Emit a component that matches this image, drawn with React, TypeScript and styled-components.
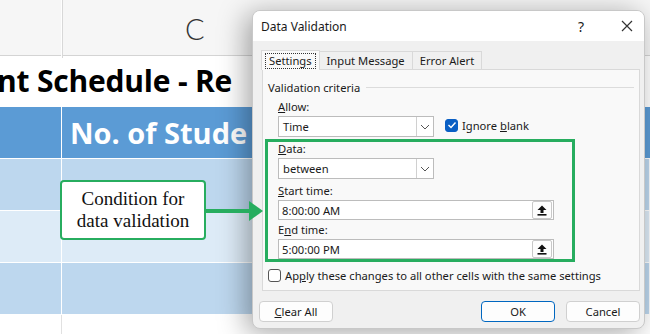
import styled, { createGlobalStyle } from "styled-components";

const GlobalStyle = createGlobalStyle`
  html, body {
    margin: 0;
    padding: 0;
    background: #ffffff;
  }
`;

const ui = `"Noto Sans", "Open Sans", sans-serif`;
const sheetFont = `Lato, "Open Sans", sans-serif`;

export default function App() {
  return (
    <Page>
      <GlobalStyle />
      <Sheet>
        <ColHeader>
          <Cell />
          <ColLetter>C</ColLetter>
        </ColHeader>
        <TitleRow>nt Schedule - Re</TitleRow>
        <Row $bg="#5b9bd5">
          <Cell />
          <HeadText>No. of Stude</HeadText>
        </Row>
        <Row $bg="#bdd7ee">
          <Cell />
          <Cell />
        </Row>
        <Row $bg="#ddebf7">
          <Cell />
          <Cell />
        </Row>
        <Row $bg="#bdd7ee">
          <Cell />
          <Cell />
        </Row>
        <Row $bg="#ffffff" $line="#e1e1e1">
          <Cell />
          <Cell />
        </Row>
      </Sheet>

      <Callout>
        Condition for
        <br />
        data validation
      </Callout>

      <Dialog>
        <TitleBar>
          <span>Data Validation</span>
          <TitleIcons>
            <span>?</span>
            <CloseIcon width="14" height="14" viewBox="0 0 14 14">
              <path d="M2 2 L12 12 M12 2 L2 12" stroke="#333" strokeWidth="1.2" />
            </CloseIcon>
          </TitleIcons>
        </TitleBar>
        <Body>
          <Tabs>
            <Tab $active>
              <Focus>Settings</Focus>
            </Tab>
            <Tab>Input Message</Tab>
            <Tab>Error Alert</Tab>
          </Tabs>
          <Panel>
            <GroupTitle>
              <span>Validation criteria</span>
              <Rule />
            </GroupTitle>
            <Field>
              <Label>
                <u>A</u>llow:
              </Label>
              <InlineRow>
                <Select>
                  <span>Time</span>
                  <DropButton>
                    <Chevron />
                  </DropButton>
                </Select>
                <Check>
                  <Box $checked>
                    <svg width="10" height="10" viewBox="0 0 10 10">
                      <path d="M1.5 5 L4 7.5 L8.5 2.5" stroke="#fff" strokeWidth="1.4" fill="none" />
                    </svg>
                  </Box>
                  <span>
                    Ignore <u>b</u>lank
                  </span>
                </Check>
              </InlineRow>
            </Field>
            <Field $gap={4}>
              <Label>
                <u>D</u>ata:
              </Label>
              <Select>
                <span>between</span>
                <DropButton>
                  <Chevron />
                </DropButton>
              </Select>
            </Field>
            <Field $gap={4}>
              <Label>
                <u>S</u>tart time:
              </Label>
              <TextBox>
                <span>8:00:00 AM</span>
                <RefButton>
                  <UpArrow />
                </RefButton>
              </TextBox>
            </Field>
            <Field $gap={2}>
              <Label>
                E<u>n</u>d time:
              </Label>
              <TextBox>
                <span>5:00:00 PM</span>
                <RefButton>
                  <UpArrow />
                </RefButton>
              </TextBox>
            </Field>
            <ApplyRow>
              <Box />
              <span>
                Ap<u>p</u>ly these changes to all other cells with the same settings
              </span>
            </ApplyRow>
          </Panel>
          <Buttons>
            <Button>
              <u>C</u>lear All
            </Button>
            <Spacer />
            <Button $primary>OK</Button>
            <Button>Cancel</Button>
          </Buttons>
          <Highlight />
        </Body>
      </Dialog>

      <Arrow width="60" height="26" viewBox="0 0 60 26">
        <rect x="0" y="11" width="46" height="4" fill="#27ad5f" />
        <polygon points="44,3 58,13 44,23" fill="#27ad5f" />
      </Arrow>
    </Page>
  );
}

function Chevron() {
  return (
    <svg width="10" height="6" viewBox="0 0 10 6">
      <path d="M1 1 L5 5 L9 1" stroke="#555" strokeWidth="1" fill="none" />
    </svg>
  );
}

function UpArrow() {
  return (
    <svg width="10" height="11" viewBox="0 0 10 11">
      <path d="M5 0.5 L9.5 5 L6.5 5 L6.5 8 L3.5 8 L3.5 5 L0.5 5 Z" fill="#111" />
      <rect x="0.5" y="9" width="9" height="1.6" fill="#111" />
    </svg>
  );
}

const Page = styled.div`
  position: relative;
  width: 650px;
  height: 334px;
  overflow: hidden;
  background: #ffffff;
`;

const Sheet = styled.div`
  display: flex;
  flex-direction: column;
`;

const ColHeader = styled.div`
  display: grid;
  grid-template-columns: 62px 1fr;
  height: 55px;
  background: #f6f6f6;
  border-bottom: 1px solid #d4d4d4;
`;

const Cell = styled.div`
  border-right: 1px solid rgba(255, 255, 255, 0.9);
`;

const ColLetter = styled.div`
  border-left: 1px solid #d8d8d8;
  padding-left: 122px;
  font-family: ${sheetFont};
  font-size: 29px;
  font-weight: 300;
  color: #333;
  line-height: 58px;
`;

const TitleRow = styled.div`
  height: 50px;
  margin-left: -3px;
  font-family: "Open Sans", sans-serif;
  font-weight: 700;
  font-size: 30px;
  line-height: 50px;
  color: #000;
  white-space: nowrap;
  letter-spacing: -0.2px;
`;

const Row = styled.div<{ $bg: string; $line?: string }>`
  display: grid;
  grid-template-columns: 62px 1fr;
  height: 51px;
  background: ${(p) => p.$bg};
  border-top: 1px solid #ffffff;
  & > div:first-child {
    border-right: 1px solid ${(p) => p.$line ?? "#ffffff"};
  }
`;

const HeadText = styled.div`
  padding-left: 8px;
  font-family: "Open Sans", sans-serif;
  font-weight: 700;
  font-size: 29px;
  line-height: 52px;
  color: #ffffff;
  white-space: nowrap;
`;

const Callout = styled.div`
  position: absolute;
  left: 60px;
  top: 180px;
  width: 142px;
  height: 56px;
  border: 2px solid #27ad5f;
  border-radius: 4px;
  background: #ffffff;
  font-family: "Liberation Serif", "DejaVu Serif", serif;
  font-size: 19px;
  line-height: 22px;
  text-align: center;
  color: #111;
  display: flex;
  align-items: center;
  justify-content: center;
`;

const Arrow = styled.svg`
  position: absolute;
  left: 205px;
  top: 198px;
`;

const Dialog = styled.div`
  position: absolute;
  left: 252px;
  top: 10px;
  width: 393px;
  height: 319px;
  border-radius: 8px;
  overflow: hidden;
  background: #f0f0f0;
  border: 1px solid #c8c8c8;
  box-sizing: border-box;
  box-shadow: -6px 4px 28px rgba(0, 0, 0, 0.35);
  font-family: ${ui};
  font-size: 11.2px;
  color: #1a1a1a;
  display: flex;
  flex-direction: column;
`;

const TitleBar = styled.div`
  height: 30px;
  background: #ffffff;
  display: flex;
  align-items: center;
  justify-content: space-between;
  padding: 0 10px 0 8px;
  font-size: 12px;
`;

const TitleIcons = styled.div`
  display: flex;
  align-items: center;
  gap: 36px;
  font-size: 14px;
`;

const CloseIcon = styled.svg`
  display: block;
`;

const Body = styled.div`
  position: relative;
  flex: 1;
  padding: 8px 4px 0 9px;
  display: flex;
  flex-direction: column;
`;

const Tabs = styled.div`
  display: flex;
  height: 20px;
  align-items: flex-end;
`;

const Tab = styled.div<{ $active?: boolean }>`
  height: ${(p) => (p.$active ? "20px" : "18px")};
  box-sizing: border-box;
  display: flex;
  align-items: center;
  border: 1px solid #d9d9d9;
  border-bottom: none;
  margin-left: -1px;
  background: ${(p) => (p.$active ? "#f9f9f9" : "#f0f0f0")};
  padding: ${(p) => (p.$active ? "0 3px" : "0 7px")};
  position: relative;
  z-index: ${(p) => (p.$active ? 1 : 0)};
  margin-bottom: ${(p) => (p.$active ? "-1px" : "0")};
`;

const Focus = styled.span`
  border: 1px dotted #333;
  padding: 0 3px;
  line-height: 14px;
`;

const Panel = styled.div`
  height: 222px;
  box-sizing: border-box;
  background: #f9f9f9;
  border: 1px solid #d9d9d9;
  padding: 9px 0 0 5px;
  display: flex;
  flex-direction: column;
`;

const GroupTitle = styled.div`
  display: flex;
  align-items: center;
  gap: 6px;
  height: 16px;
  padding-right: 5px;
`;

const Rule = styled.div`
  flex: 1;
  height: 1px;
  background: #dcdcdc;
`;

const Field = styled.div<{ $gap?: number }>`
  display: flex;
  flex-direction: column;
  padding-left: 10px;
  margin-top: ${(p) => p.$gap ?? 4}px;
`;

const Label = styled.div`
  height: 16px;
  line-height: 16px;
  margin-bottom: 1px;
`;

const InlineRow = styled.div`
  display: flex;
  align-items: flex-start;
  gap: 11px;
`;

const Select = styled.div`
  width: 156px;
  height: 21px;
  box-sizing: border-box;
  background: #ffffff;
  border: 1px solid #bcbcbc;
  display: flex;
  align-items: center;
  justify-content: space-between;
  padding-left: 4px;
`;

const DropButton = styled.div`
  width: 16px;
  height: 100%;
  border-left: 1px solid #d0d0d0;
  display: flex;
  align-items: center;
  justify-content: center;
`;

const Check = styled.div`
  display: flex;
  align-items: center;
  gap: 4px;
  height: 16px;
  margin-top: 1px;
`;

const Box = styled.div<{ $checked?: boolean }>`
  width: 13px;
  height: 13px;
  box-sizing: border-box;
  border-radius: 3px;
  background: ${(p) => (p.$checked ? "#0a5fc4" : "#ffffff")};
  border: 1px solid ${(p) => (p.$checked ? "#0a5fc4" : "#555")};
  display: flex;
  align-items: center;
  justify-content: center;
`;

const TextBox = styled.div`
  width: 276px;
  height: 20px;
  box-sizing: border-box;
  background: #ffffff;
  border: 1px solid #bcbcbc;
  display: flex;
  align-items: center;
  justify-content: space-between;
  padding-left: 3px;
`;

const RefButton = styled.div`
  width: 18px;
  height: 16px;
  margin-right: 1px;
  border: 1px solid #c8c8c8;
  border-radius: 2px;
  background: #fdfdfd;
  display: flex;
  align-items: center;
  justify-content: center;
`;

const ApplyRow = styled.div`
  display: flex;
  align-items: center;
  gap: 4px;
  margin-top: 9px;
`;

const Buttons = styled.div`
  display: flex;
  align-items: center;
  gap: 11px;
  margin-top: 10px;
  margin-left: -3px;
`;

const Spacer = styled.div`
  flex: 1;
`;

const Button = styled.div<{ $primary?: boolean }>`
  width: 74px;
  height: 21px;
  box-sizing: border-box;
  border-radius: 4px;
  background: #fdfdfd;
  border: 1px solid ${(p) => (p.$primary ? "#0067c0" : "#d0d0d0")};
  display: flex;
  align-items: center;
  justify-content: center;
`;

const Highlight = styled.div`
  position: absolute;
  left: 12px;
  top: 98px;
  width: 310px;
  height: 123px;
  box-sizing: border-box;
  border: 3px solid #27ad5f;
  pointer-events: none;
`;
